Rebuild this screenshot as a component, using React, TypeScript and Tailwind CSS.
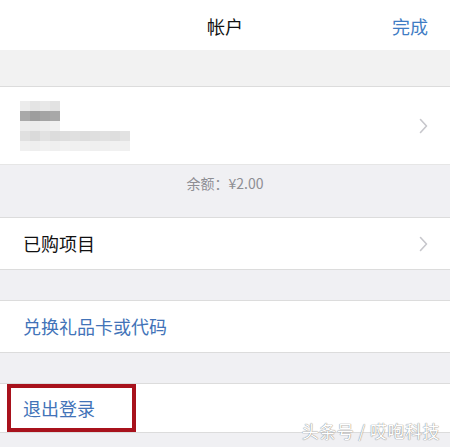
import React from "react";

const font = { fontFamily: '"Noto Sans CJK SC", "Noto Sans", sans-serif' };

// pixelated (blurred) user name + email block
const mosaic: string[][] = [
  ["#ececec", "#e4e4e4", "#e8e8e8", "#e2e2e2"],
  ["#a9a9a9", "#9d9d9d", "#a4a4a4", "#a8a8a8"],
  ["#ededed", "#ebebeb", "#eeeeee", "#f1f1f1"],
  ["#e0e0e0", "#dadada", "#e2e2e2", "#dcdcdc", "#dedede", "#e0e0e0", "#dddddd", "#dfdfdf", "#e1e1e1", "#dedede", "#e2e2e2"],
  ["#f0f0f0", "#eeeeee", "#f1f1f1", "#efefef", "#f2f2f2", "#f0f0f0", "#f1f1f1", "#efefef", "#f0f0f0", "#f1f1f1", "#f0f0f0"],
];

const Chevron = () => (
  <svg width="9" height="16" viewBox="0 0 9 16" fill="none">
    <path d="M1.5 1.5 L7.5 8 L1.5 14.5" stroke="#c7c7cc" strokeWidth="1.6" strokeLinecap="round" strokeLinejoin="round" />
  </svg>
);

const App: React.FC = () => {
  return (
    <div className="w-[450px] h-[447px] overflow-hidden bg-[#f0f0f3] relative" style={font}>
      {/* Nav bar */}
      <div className="h-[50px] bg-white grid grid-cols-[1fr_auto_1fr] items-center px-[22px]">
        <div />
        <div className="text-[18px] text-[#111] pt-[2px]">帐户</div>
        <div className="text-right text-[18px] text-[#3f7cc4] pt-[2px]">完成</div>
      </div>
      <div className="h-[37px] bg-[#f2f2f2] border-b border-[#dcdcdc]" />

      {/* Account cell */}
      <div className="h-[77px] bg-white flex items-center justify-between pl-[20px] pr-[22px]">
        <div className="flex flex-col pt-[1px]">
          {mosaic.map((row, i) => (
            <div key={i} className="flex">
              {row.map((c, j) => (
                <div key={j} className="w-[10px] h-[10px]" style={{ backgroundColor: c }} />
              ))}
            </div>
          ))}
        </div>
        <Chevron />
      </div>

      {/* Balance */}
      <div className="h-[53px] bg-[#f0f0f3] border-t border-[#e6e6e6] flex justify-center pt-[8px]">
        <span className="text-[14px] text-[#8e8e93]">余额：¥2.00</span>
      </div>

      {/* Purchased */}
      <div className="h-[53px] bg-white border-t border-[#dcdcdc] border-b flex items-center justify-between pl-[23px] pr-[22px]">
        <span className="text-[18px] text-[#111]">已购项目</span>
        <Chevron />
      </div>

      <div className="h-[30px]" />

      {/* Redeem */}
      <div className="h-[53px] bg-white border-t border-b border-[#dcdcdc] flex items-center pl-[23px]">
        <span className="text-[18px] text-[#4273b8]">兑换礼品卡或代码</span>
      </div>

      <div className="h-[30px]" />

      {/* Sign out */}
      <div className="h-[50px] bg-white border-t border-b border-[#dcdcdc] flex items-stretch pl-[7px]">
        <div className="w-[129px] border-[4px] border-[#a8121c] flex items-center pl-[12px]">
          <span className="text-[18px] text-[#4273b8]">退出登录</span>
        </div>
      </div>

      {/* Watermark */}
      <div
        className="absolute right-[10px] top-[418px] text-[17px] text-white tracking-[0.5px]"
        style={{ textShadow: "0 0 1px #888, 0 0 1px #888" }}
      >
        头条号 / 哎咆科技
      </div>
    </div>
  );
};

export default App;
